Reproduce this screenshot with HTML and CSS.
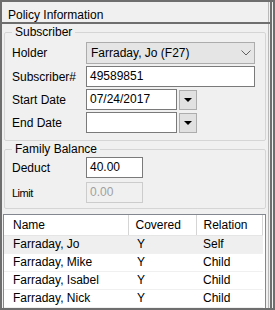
FILE: index.html
```html
<!DOCTYPE html>
<html lang="en">
<head>
    <meta charset="UTF-8">
    <title>Policy Information</title>
    <link rel="stylesheet" href="styles.css">
</head>
<body>
    <div class="window">
        <div class="panel">
            <div class="title">Policy Information</div>

            <fieldset class="group subscriber">
                <legend>Subscriber</legend>
                <div class="field">
                    <label>Holder</label>
                    <div class="combo">
                        <span>Farraday, Jo (F27)</span>
                        <svg width="10" height="6" viewBox="0 0 10 6"><polyline points="0.5,0.5 5,5 9.5,0.5" fill="none" stroke="#606060" stroke-width="1"/></svg>
                    </div>
                </div>
                <div class="field">
                    <label>Subscriber#</label>
                    <div class="input wide">49589851</div>
                </div>
                <div class="field">
                    <label>Start Date</label>
                    <div class="input date">07/24/2017</div>
                    <div class="drop"><span class="arrow"></span></div>
                </div>
                <div class="field">
                    <label>End Date</label>
                    <div class="input date"></div>
                    <div class="drop"><span class="arrow"></span></div>
                </div>
            </fieldset>

            <fieldset class="group balance">
                <legend>Family Balance</legend>
                <div class="field">
                    <label>Deduct</label>
                    <div class="input short">40.00</div>
                </div>
                <div class="field">
                    <label class="small">Limit</label>
                    <div class="input short disabled">0.00</div>
                </div>
            </fieldset>

            <div class="list">
                <table>
                    <thead>
                        <tr>
                            <th class="col-name">Name</th>
                            <th class="col-covered">Covered</th>
                            <th class="col-relation">Relation</th>
                        </tr>
                    </thead>
                    <tbody>
                        <tr class="selected"><td>Farraday, Jo</td><td>Y</td><td>Self</td></tr>
                        <tr><td>Farraday, Mike</td><td>Y</td><td>Child</td></tr>
                        <tr><td>Farraday, Isabel</td><td>Y</td><td>Child</td></tr>
                        <tr><td>Farraday, Nick</td><td>Y</td><td>Child</td></tr>
                    </tbody>
                </table>
            </div>
        </div>
    </div>
</body>
</html>
```

FILE: styles.css
```css
body {
    margin: 0;
    font-family: "Liberation Sans", Arial, sans-serif;
    font-size: 12px;
    color: #000;
    background-color: #f0f0f0;
}

.window {
    width: 275px;
    height: 310px;
    box-sizing: border-box;
    border: 2px solid #6e6e6e;
    overflow: hidden;
}

.panel {
    height: 100%;
    margin-right: 1px;
    border-right: 2px solid #6e6e6e;
    box-shadow: inset -1px 0 #f0f0f0, inset -2px 0 #b9b9b9;
    display: flex;
    flex-direction: column;
}

.title {
    padding: 6px 0 0 6px;
    line-height: 14px;
    height: 14px;
    border-bottom: 2px solid #6e6e6e;
}

.group {
    margin: 1px 0 0 2px;
    width: 262px;
    box-sizing: border-box;
    border: 1px solid #d5d5d5;
    border-radius: 2px;
    padding: 0 7px;
    display: flex;
    flex-direction: column;
    gap: 2px;
}

.group legend {
    padding: 0 3px;
    line-height: 14px;
}

.subscriber {
    padding-top: 3px;
    padding-bottom: 7px;
}

.balance {
    padding-top: 1px;
    padding-bottom: 5px;
    gap: 4px;
}

.field {
    display: flex;
    align-items: center;
}

.field label {
    width: 74px;
    flex: none;
}

.field label.small {
    font-size: 11px;
    letter-spacing: -0.5px;
}

.combo {
    width: 169px;
    height: 22px;
    box-sizing: border-box;
    border: 1px solid #acacac;
    background-color: #e5e5e5;
    padding: 0 3px 0 4px;
    display: flex;
    align-items: center;
    justify-content: space-between;
}

.input {
    height: 21px;
    box-sizing: border-box;
    border: 1px solid #7a7a7a;
    background-color: #fff;
    padding: 0 3px;
    line-height: 19px;
}

.input.wide {
    width: 169px;
}

.input.date {
    width: 91px;
}

.input.short {
    width: 57px;
}

.input.disabled {
    border-color: #cccccc;
    background-color: #f0f0f0;
    color: #a0a0a0;
}

.drop {
    width: 18px;
    height: 20px;
    margin-left: 2px;
    box-sizing: border-box;
    border: 1px solid #adadad;
    background-color: #e1e1e1;
    display: flex;
    align-items: center;
    justify-content: center;
}

.arrow {
    width: 0;
    height: 0;
    border-left: 4px solid transparent;
    border-right: 4px solid transparent;
    border-top: 4px solid #000;
    margin-top: 1px;
}

.list {
    margin: 5px 0 0 1px;
    width: 263px;
    flex: 1;
    box-sizing: border-box;
    border: 1px solid #828790;
    border-bottom: none;
    background-color: #fff;
    overflow: hidden;
}

.list table {
    width: 259px;
    border-collapse: collapse;
}

.list th {
    height: 20px;
    padding: 0 0 0 7px;
    text-align: left;
    font-weight: normal;
    border-right: 1px solid #d5d5d5;
    border-bottom: 1px solid #e5e5e5;
    box-sizing: border-box;
}

.list th.col-name {
    width: 124px;
    padding-left: 9px;
}

.list th.col-covered {
    width: 68px;
}

.list td {
    height: 18px;
    padding: 0 0 0 9px;
    border-bottom: 1px solid #f0f0f0;
    box-sizing: border-box;
}

.list td:last-child {
    padding-left: 7px;
}

.list tr.selected td {
    background-color: #efefef;
}
```
